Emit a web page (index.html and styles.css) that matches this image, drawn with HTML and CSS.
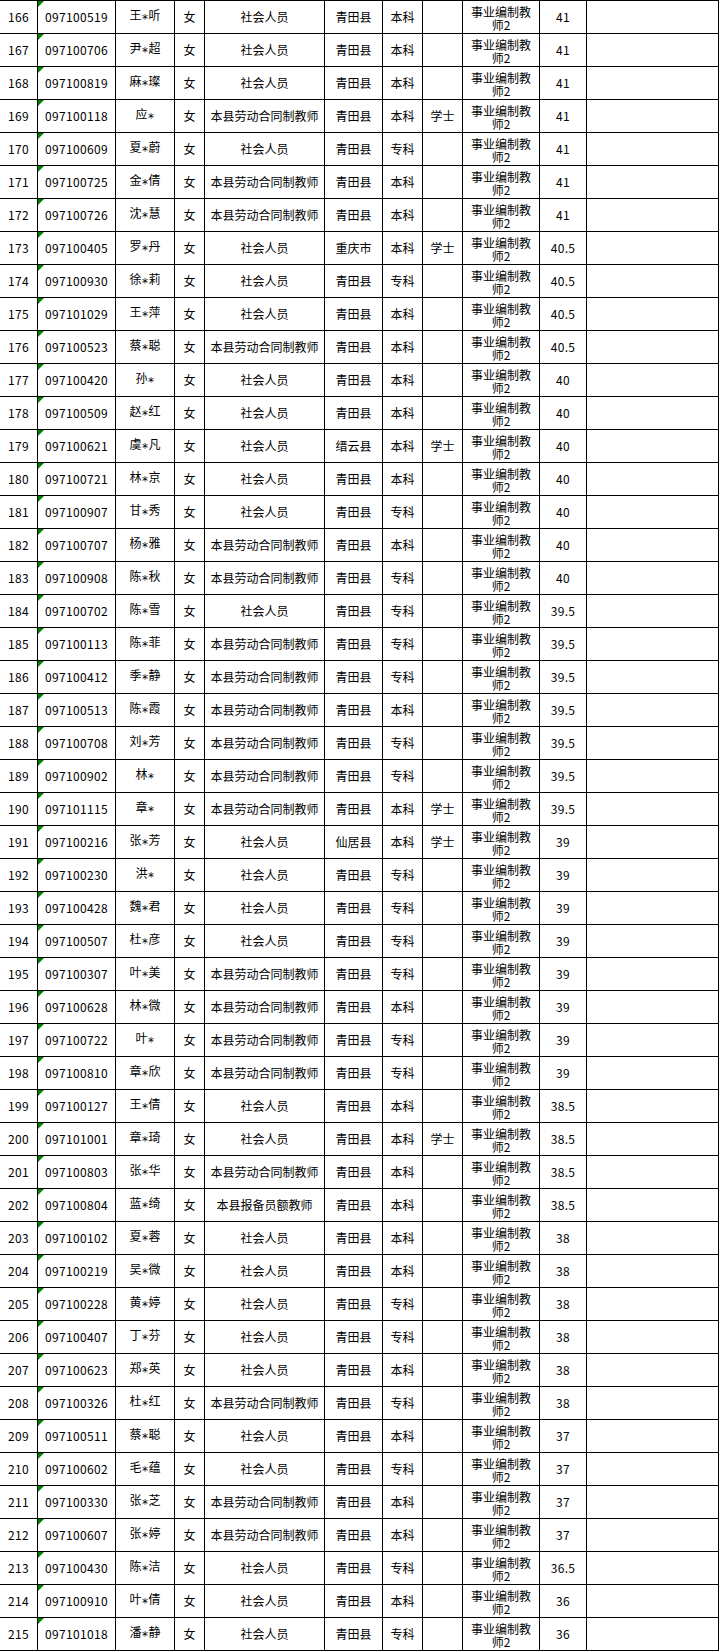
FILE: index.html
```html
<!DOCTYPE html>
<html lang="zh">
<head>
<meta charset="utf-8">
<title>成绩表</title>
<link rel="stylesheet" href="styles.css">
</head>
<body>
<div class="sheet" id="sheet"></div>
<script src="app.js"></script>
</body>
</html>
```
FILE: styles.css
```css
html, body {
  margin: 0;
  padding: 0;
  background: #fff;
}
.sheet {
  width: 719px;
  border-top: 1px solid #000;
  font-family: "Noto Sans CJK SC", "Noto Sans", sans-serif;
  font-size: 12px;
  color: #000;
}
.row {
  display: grid;
  grid-template-columns: 38px 78px 59px 30px 120px 58px 40px 40px 77px 47px 132px;
  height: 33px;
}
.cell {
  box-sizing: border-box;
  border-right: 1px solid #000;
  border-bottom: 1px solid #000;
  display: flex;
  align-items: center;
  justify-content: center;
  text-align: center;
  line-height: 14px;
  white-space: nowrap;
  overflow: hidden;
}
.num {
  letter-spacing: 0.3px;
}
.id {
  position: relative;
  letter-spacing: 0.35px;
}
.id::before {
  content: "";
  position: absolute;
  top: 0;
  left: 0;
  border-top: 6px solid #008000;
  border-right: 6px solid transparent;
}
.star {
  display: inline-block;
  font-family: "DejaVu Sans", sans-serif;
  font-size: 12px;
  vertical-align: -3px;
  margin: 0 0.5px;
}
.post {
  white-space: normal;
  padding: 1px 6px 0;
  line-height: 13px;
}
```
FILE: app.js
```js
var data = [
["166","097100519","王*听","社会人员","青田县","本科","","41"],
["167","097100706","尹*超","社会人员","青田县","本科","","41"],
["168","097100819","麻*璨","社会人员","青田县","本科","","41"],
["169","097100118","应*","本县劳动合同制教师","青田县","本科","学士","41"],
["170","097100609","夏*蔚","社会人员","青田县","专科","","41"],
["171","097100725","金*倩","本县劳动合同制教师","青田县","本科","","41"],
["172","097100726","沈*慧","本县劳动合同制教师","青田县","本科","","41"],
["173","097100405","罗*丹","社会人员","重庆市","本科","学士","40.5"],
["174","097100930","徐*莉","社会人员","青田县","专科","","40.5"],
["175","097101029","王*萍","社会人员","青田县","本科","","40.5"],
["176","097100523","蔡*聪","本县劳动合同制教师","青田县","本科","","40.5"],
["177","097100420","孙*","社会人员","青田县","本科","","40"],
["178","097100509","赵*红","社会人员","青田县","本科","","40"],
["179","097100621","虞*凡","社会人员","缙云县","本科","学士","40"],
["180","097100721","林*京","社会人员","青田县","本科","","40"],
["181","097100907","甘*秀","社会人员","青田县","专科","","40"],
["182","097100707","杨*雅","本县劳动合同制教师","青田县","本科","","40"],
["183","097100908","陈*秋","本县劳动合同制教师","青田县","专科","","40"],
["184","097100702","陈*雪","社会人员","青田县","专科","","39.5"],
["185","097100113","陈*菲","本县劳动合同制教师","青田县","专科","","39.5"],
["186","097100412","季*静","本县劳动合同制教师","青田县","专科","","39.5"],
["187","097100513","陈*霞","本县劳动合同制教师","青田县","本科","","39.5"],
["188","097100708","刘*芳","本县劳动合同制教师","青田县","专科","","39.5"],
["189","097100902","林*","本县劳动合同制教师","青田县","专科","","39.5"],
["190","097101115","章*","本县劳动合同制教师","青田县","本科","学士","39.5"],
["191","097100216","张*芳","社会人员","仙居县","本科","学士","39"],
["192","097100230","洪*","社会人员","青田县","专科","","39"],
["193","097100428","魏*君","社会人员","青田县","专科","","39"],
["194","097100507","杜*彦","社会人员","青田县","专科","","39"],
["195","097100307","叶*美","本县劳动合同制教师","青田县","专科","","39"],
["196","097100628","林*微","本县劳动合同制教师","青田县","本科","","39"],
["197","097100722","叶*","本县劳动合同制教师","青田县","专科","","39"],
["198","097100810","章*欣","本县劳动合同制教师","青田县","专科","","39"],
["199","097100127","王*倩","社会人员","青田县","本科","","38.5"],
["200","097101001","章*琦","社会人员","青田县","本科","学士","38.5"],
["201","097100803","张*华","本县劳动合同制教师","青田县","本科","","38.5"],
["202","097100804","蓝*绮","本县报备员额教师","青田县","本科","","38.5"],
["203","097100102","夏*蓉","社会人员","青田县","本科","","38"],
["204","097100219","吴*微","社会人员","青田县","本科","","38"],
["205","097100228","黄*婷","社会人员","青田县","专科","","38"],
["206","097100407","丁*芬","社会人员","青田县","专科","","38"],
["207","097100623","郑*英","社会人员","青田县","本科","","38"],
["208","097100326","杜*红","本县劳动合同制教师","青田县","专科","","38"],
["209","097100511","蔡*聪","社会人员","青田县","本科","","37"],
["210","097100602","毛*蕴","社会人员","青田县","专科","","37"],
["211","097100330","张*芝","本县劳动合同制教师","青田县","本科","","37"],
["212","097100607","张*婷","本县劳动合同制教师","青田县","本科","","37"],
["213","097100430","陈*洁","社会人员","青田县","专科","","36.5"],
["214","097100910","叶*倩","社会人员","青田县","本科","","36"],
["215","097101018","潘*静","社会人员","青田县","专科","","36"]
];
var sheet = document.getElementById("sheet");
function nameNode(text) {
  var s = document.createElement("span");
  var parts = text.split("*");
  s.appendChild(document.createTextNode(parts[0]));
  var st = document.createElement("span");
  st.className = "star";
  st.textContent = "*";
  s.appendChild(st);
  s.appendChild(document.createTextNode(parts[1] || ""));
  return s;
}
data.forEach(function (r) {
  var row = document.createElement("div");
  row.className = "row";
  var cells = [
    [r[0], "num"], [r[1], "id"], [r[2], "name"], ["女", ""], [r[3], ""],
    [r[4], ""], [r[5], ""], [r[6], ""], ["事业编制教师2", "post"], [r[7], "num"], ["", ""]
  ];
  cells.forEach(function (c) {
    var d = document.createElement("div");
    d.className = "cell" + (c[1] ? " " + c[1] : "");
    if (c[1] === "name") {
      d.appendChild(nameNode(c[0]));
    } else {
      var s = document.createElement("span");
      s.textContent = c[0];
      d.appendChild(s);
    }
    row.appendChild(d);
  });
  sheet.appendChild(row);
});
```
